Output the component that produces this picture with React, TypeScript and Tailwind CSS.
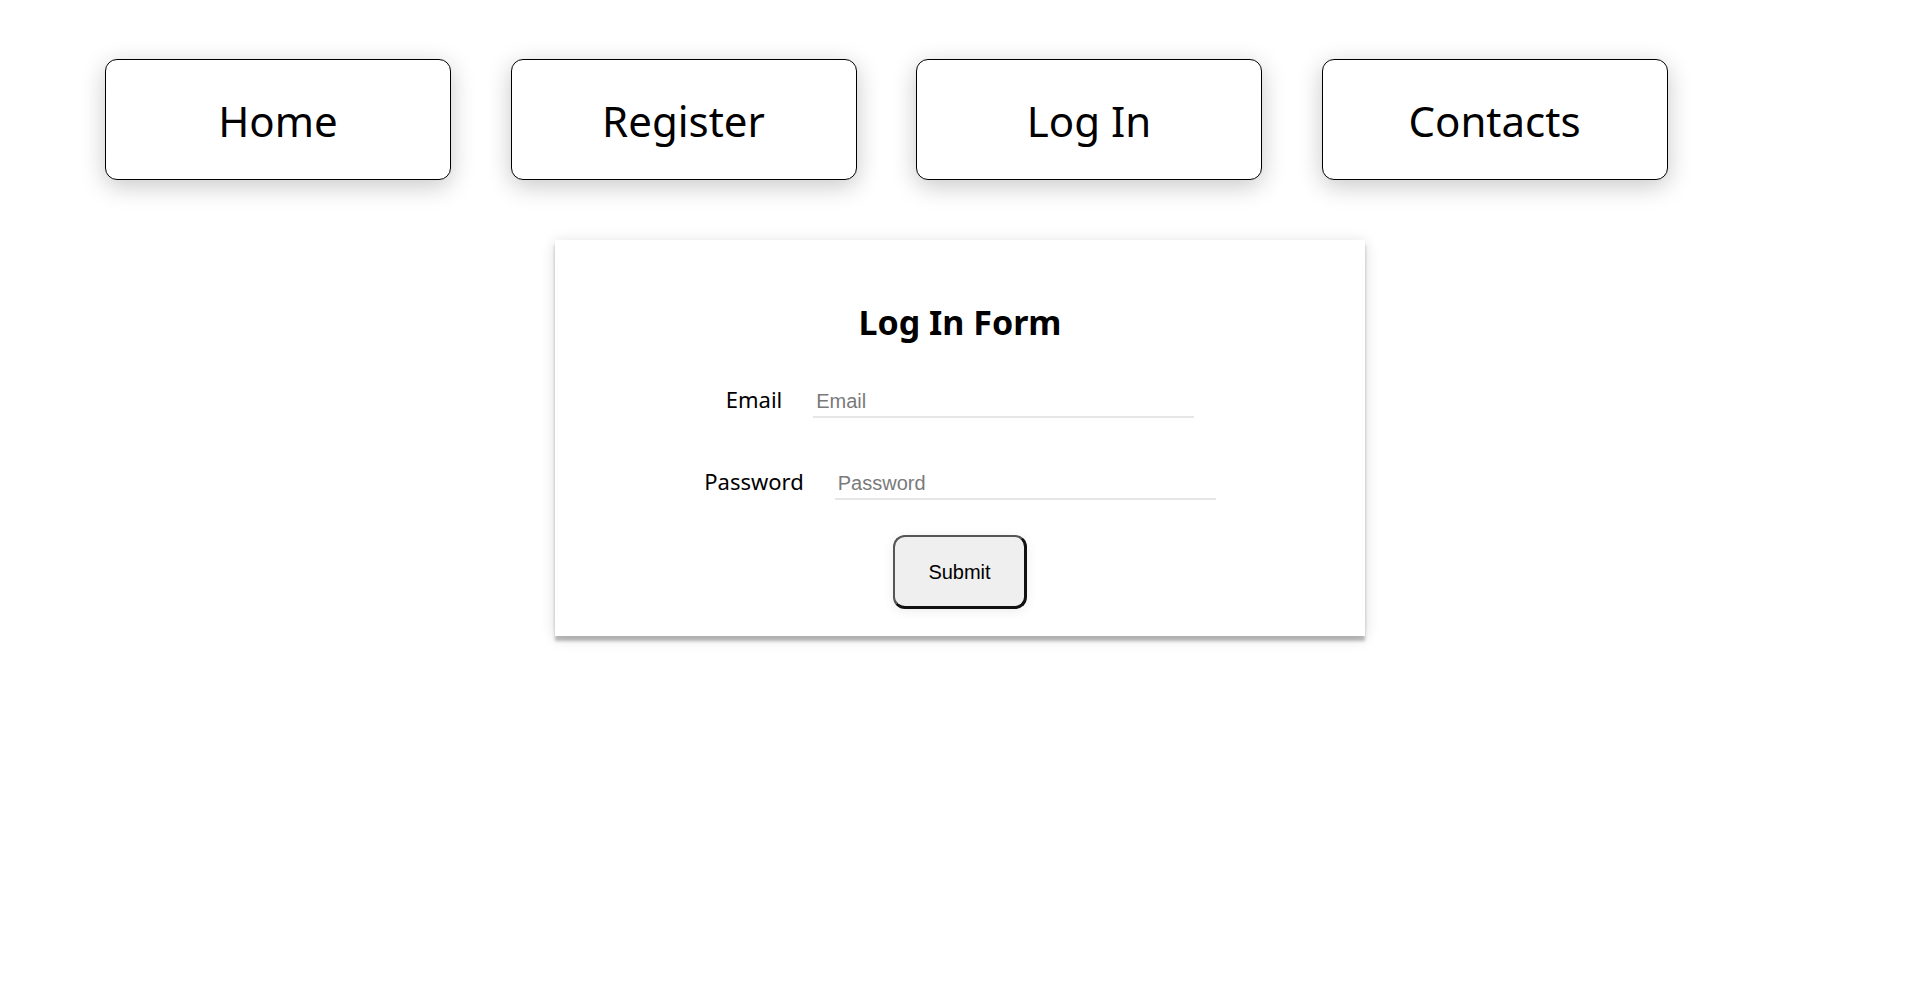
const navItems = ["Home", "Register", "Log In", "Contacts"];

export default function App() {
  return (
    <div className="min-h-screen bg-white text-black font-['Noto_Sans',sans-serif]">
      <nav className="flex gap-[59.5px] pl-[105px] pt-[59px]">
        {navItems.map((item) => (
          <a
            key={item}
            href="#"
            className="flex h-[121px] w-[346px] items-center justify-center rounded-xl border border-black bg-white pt-[2px] text-[42px] shadow-[0_6px_24px_rgba(0,0,0,0.22)]"
          >
            {item}
          </a>
        ))}
      </nav>

      <div className="mx-auto mt-[60px] w-[810px] bg-white pt-[62px] pb-[27px] shadow-[0_5px_3px_rgba(0,0,0,0.25),0_2px_14px_rgba(0,0,0,0.14)]">
        <h2 className="text-center text-[34px] font-bold leading-[40px]">Log In Form</h2>

        <form className="mt-[42px] flex flex-col items-center">
          <div className="flex items-baseline gap-[31px]">
            <label className="text-[22px] leading-[30px]">Email</label>
            <input
              type="email"
              placeholder="Email"
              className="w-[381px] border-b-2 border-[#e6e6e6] px-[3px] pt-[2px] pb-0 font-['Liberation_Sans',Arial,sans-serif] text-[20px] outline-none placeholder:text-[#7a7a7a]"
            />
          </div>
          <div className="mt-[48px] flex items-baseline gap-[31px]">
            <label className="text-[22px] leading-[30px]">Password</label>
            <input
              type="password"
              placeholder="Password"
              className="w-[381px] border-b-2 border-[#e6e6e6] px-[3px] pt-[2px] pb-0 font-['Liberation_Sans',Arial,sans-serif] text-[20px] outline-none placeholder:text-[#7a7a7a]"
            />
          </div>
          <button
            type="button"
            className="mt-[35px] h-[74px] w-[134px] rounded-xl border-t-2 border-l-2 border-r-[3px] border-b-[3px] border-t-[#555] border-l-[#555] border-r-[#111] border-b-[#111] bg-[#efefef] font-['Liberation_Sans',Arial,sans-serif] text-[20px] shadow-[0_2px_12px_rgba(0,0,0,0.08)]"
          >
            Submit
          </button>
        </form>
      </div>
    </div>
  );
}
